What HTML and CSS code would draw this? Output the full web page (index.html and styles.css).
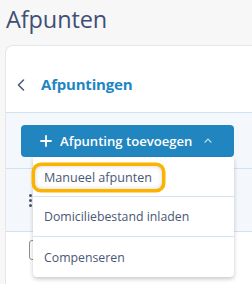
FILE: index.html
```html
<!DOCTYPE html>
<html lang="nl">
<head>
    <meta charset="UTF-8">
    <meta name="viewport" content="width=device-width, initial-scale=1.0">
    <title>Afpunten</title>
    <link rel="stylesheet" href="styles.css">
</head>
<body>
    <h1 class="page-title">Afpunten</h1>
    <div class="card">
        <div class="card-header">
            <svg class="back" width="8" height="12" viewBox="0 0 8 12"><path d="M6.5 1 L1.5 6 L6.5 11" fill="none" stroke="#4a5775" stroke-width="1.5" stroke-linecap="round" stroke-linejoin="round"/></svg>
            <span class="card-title">Afpuntingen</span>
        </div>
        <div class="toolbar">
            <div class="dropdown">
                <button class="btn-add" type="button">
                    <svg width="12" height="12" viewBox="0 0 12 12"><path d="M6 1 V11 M1 6 H11" stroke="#fff" stroke-width="1.8" stroke-linecap="round"/></svg>
                    <span>Afpunting toevoegen</span>
                    <svg class="caret" width="8" height="5" viewBox="0 0 8 5"><path d="M1 4.2 L4 1.2 L7 4.2" fill="none" stroke="#cfe4f3" stroke-width="1.2" stroke-linecap="round" stroke-linejoin="round"/></svg>
                </button>
                <ul class="menu">
                    <li class="menu-item"><span class="focus">Manueel afpunten</span></li>
                    <li class="menu-item">Domiciliebestand inladen</li>
                    <li class="menu-item">Compenseren</li>
                </ul>
            </div>
        </div>
        <div class="row">
            <span class="dots"><i></i><i></i><i></i></span>
        </div>
        <div class="footer">
            <span class="select"></span>
        </div>
    </div>
</body>
</html>
```

FILE: styles.css
```css
body {
    margin: 0;
    background-color: #f7f7f7;
    font-family: "Open Sans", "Noto Sans", sans-serif;
    overflow: hidden;
    height: 284px;
}
.page-title {
    margin: 0;
    padding: 3px 0 0 6px;
    height: 42px;
    font-size: 23.5px;
    font-weight: 500;
    color: #3f5075;
    letter-spacing: -0.1px;
}
.card {
    margin-left: 5px;
    background-color: white;
    border: 1px solid #e4e6e9;
    border-right: none;
    border-bottom: none;
    border-radius: 8px 0 0 0;
    height: 238px;
}
.card-header {
    height: 66px;
    box-sizing: border-box;
    padding: 10px 0 0 11px;
    display: flex;
    align-items: center;
}
.back {
    margin-right: 16px;
    margin-top: 1px;
}
.card-title {
    font-size: 15px;
    font-weight: 700;
    color: #1f86c4;
    letter-spacing: -0.2px;
}
.toolbar {
    background-color: #f4f8fc;
    border-top: 1px solid #cfe3f1;
    border-bottom: 1px solid #cfe3f1;
    padding: 12px 0 11px 15px;
}
.dropdown {
    position: relative;
    width: 213px;
}
.btn-add {
    width: 213px;
    height: 32px;
    display: flex;
    align-items: center;
    padding: 0 0 0 19px;
    background-color: #2185c0;
    color: white;
    border: none;
    border-radius: 4px;
    font-family: inherit;
    font-size: 13.1px;
    font-weight: 600;
}
.btn-add span {
    margin-left: 8px;
    margin-right: 12px;
}
.caret {
    margin-top: -1px;
}
.menu {
    position: absolute;
    top: 32px;
    left: 12px;
    right: 0;
    margin: 0;
    padding: 0;
    list-style: none;
    background-color: white;
    border-radius: 0 0 4px 4px;
    box-shadow: 0 2px 4px rgba(0, 0, 0, 0.22);
    z-index: 2;
}
.menu-item {
    height: 39px;
    display: flex;
    align-items: center;
    padding-left: 11px;
    font-size: 12.3px;
    color: #4a5775;
    border-bottom: 1px solid #d3e5f2;
}
.menu-item:last-child {
    border-bottom: none;
    height: 40px;
}
.focus {
    margin-left: -9px;
    margin-top: 2px;
    padding: 3px 10px 3px 9px;
    border-radius: 6px;
    font-size: 12.6px;
    box-shadow: 0 0 0 3.5px #fbb300, inset 0 0 4px rgba(0, 0, 0, 0.18);
}
.row {
    height: 63px;
    background-color: #f4f8fc;
    border-bottom: 1px solid #cfe3f1;
    padding: 25px 0 0 23px;
    box-sizing: border-box;
}
.dots {
    display: flex;
    flex-direction: column;
    gap: 2px;
}
.dots i {
    width: 3px;
    height: 3px;
    border-radius: 50%;
    background-color: #4a5568;
}
.footer {
    padding: 8px 0 0 23px;
}
.select {
    display: block;
    width: 60px;
    height: 18px;
    border: 1px solid #8a8f98;
    border-radius: 3px;
}
```
